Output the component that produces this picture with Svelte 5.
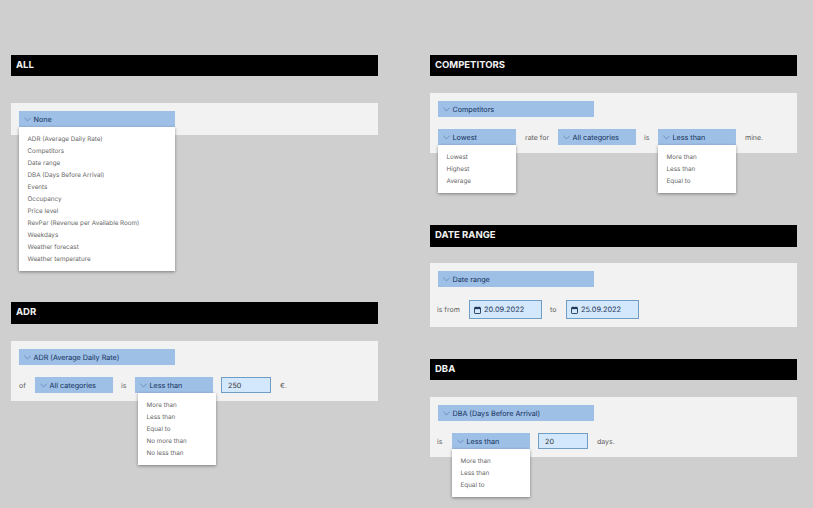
<script>
  const all = ['ADR (Average Daily Rate)','Competitors','Date range','DBA (Days Before Arrival)','Events','Occupancy','Price level','RevPar (Revenue per Available Room)','Weekdays','Weather forecast','Weather temperature'];
  const cmp3 = ['More than','Less than','Equal to'];
  const cmp5 = ['More than','Less than','Equal to','No more than','No less than'];
  const rank = ['Lowest','Highest','Average'];
</script>

{#snippet select(label, wide, items, shift)}
  <div class="select" class:wide>
    <svg class="chev" width="7" height="5" viewBox="0 0 7 5"><path d="M.4.8 3.5 3.9 6.6.8" fill="none" stroke="#4f7db3" stroke-width=".7"/></svg>
    <span>{label}</span>
    {#if items}
      <ul class="menu" class:shift>
        {#each items as item}<li>{item}</li>{/each}
      </ul>
    {/if}
  </div>
{/snippet}

{#snippet date(value)}
  <div class="field date">
    <svg width="7" height="8" viewBox="0 0 7 8"><rect x=".5" y="1.5" width="6" height="6" rx=".6" fill="none" stroke="#1d3557" stroke-width=".9"/><rect x=".5" y="1.5" width="6" height="1.6" fill="#1d3557"/><path d="M2 .4v1.4M5 .4v1.4" stroke="#1d3557" stroke-width=".8"/></svg>
    <span>{value}</span>
  </div>
{/snippet}

<main class="page">
  <div class="column">
    <section class="gap-all">
      <h2 class="title-all">ALL</h2>
      <div class="panel">
        {@render select('None', true, all)}
      </div>
    </section>
    <section>
      <h2 class="tall">ADR</h2>
      <div class="panel">
        {@render select('ADR (Average Daily Rate)', true)}
        <div class="row">
          <span class="w-of">of</span>
          {@render select('All categories')}
          <span class="w-is">is</span>
          {@render select('Less than', false, cmp5, true)}
          <div class="field num">250</div>
          <span class="w-end">€.</span>
        </div>
      </div>
    </section>
  </div>

  <div class="column">
    <section class="gap-comp">
      <h2>COMPETITORS</h2>
      <div class="panel">
        {@render select('Competitors', true)}
        <div class="row">
          {@render select('Lowest', false, rank)}
          <span class="w-rate">rate for</span>
          {@render select('All categories')}
          <span class="w-is2">is</span>
          {@render select('Less than', false, cmp3)}
          <span class="w-end">mine.</span>
        </div>
      </div>
    </section>
    <section class="gap-date">
      <h2 class="tall date-title">DATE RANGE</h2>
      <div class="panel">
        {@render select('Date range', true)}
        <div class="row date-row">
          <span class="w-from">is from</span>
          {@render date('20.09.2022')}
          <span class="w-to">to</span>
          {@render date('25.09.2022')}
        </div>
      </div>
    </section>
    <section>
      <h2>DBA</h2>
      <div class="panel">
        {@render select('DBA (Days Before Arrival)', true)}
        <div class="row">
          <span class="w-of2">is</span>
          {@render select('Less than', false, cmp3)}
          <div class="field num">20</div>
          <span class="w-end">days.</span>
        </div>
      </div>
    </section>
  </div>
</main>

<style>
  :global(body) { margin: 0; background: #cfcfcf; }
  .page {
    display: flex;
    gap: 52px;
    padding: 55px 16px 0 11px;
    height: 453px;
    overflow: hidden;
    opacity: .999;
    text-rendering: geometricPrecision;
    font-family: "Inter", "Liberation Sans", sans-serif;
    font-size: 7px;
    color: #5c5c5c;
  }
  .column { width: 367px; flex: none; }
  section { margin: 0; }
  .gap-all { margin-bottom: 167px; }
  .gap-comp { margin-bottom: 72px; }
  .gap-date { margin-bottom: 32px; }
  h2 {
    margin: 0 0 17px;
    height: 21px;
    line-height: 21px;
    padding-left: 5px;
    background: #000;
    color: #f2f2f2;
    font-size: 9.5px;
    font-weight: 700;
  }
  h2.tall { height: 22px; line-height: 22px; }
  h2.date-title { margin-bottom: 16px; }
  .title-all { margin-bottom: 27px; }
  .panel {
    background: #f2f2f2;
    padding: 8px;
  }
  .row {
    display: flex;
    align-items: center;
    margin-top: 12px;
    height: 16px;
  }
  .date-row { margin-top: 13px; height: 19px; }
  .select {
    position: relative;
    flex: none;
    width: 78px;
    height: 16px;
    display: flex;
    align-items: center;
    background: #9ebfe6;
    color: #12305a;
    font-size: 7.2px;
  }
  .select.wide { width: 156px; }
  .chev { margin: 0 2.5px 0 5px; flex: none; }
  .menu {
    position: absolute;
    left: 0;
    top: 16px;
    z-index: 2;
    width: 78px;
    box-sizing: border-box;
    margin: 0;
    padding: 6px 0 6px 8.5px;
    list-style: none;
    background: #fff;
    box-shadow: 0 1px 3px rgba(0,0,0,.4);
    color: #6a6a6a;
    font-size: 6.3px;
    line-height: 12px;
    white-space: nowrap;
  }
  .wide > .menu { width: 156px; }
  .menu.shift { left: 3px; }
  .field {
    box-sizing: border-box;
    background: #d3e8fc;
    border: 1px solid #6f9dc4;
    color: #333;
    display: flex;
    align-items: center;
  }
  .num { width: 50px; height: 16px; padding-left: 6px; margin-left: 8px; font-size: 7.2px; }
  .date { width: 73px; height: 19px; padding-left: 4px; gap: 3px; color: #1d3557; font-size: 7.4px; }
  .w-of { width: 16px; }
  .w-is { width: 22px; padding-left: 8px; box-sizing: border-box; }
  .w-is2 { width: 22px; padding-left: 8px; box-sizing: border-box; }
  .w-of2 { width: 14px; margin-left: -1px; padding-right: 1px; }
  .w-rate { width: 42px; padding-left: 9px; box-sizing: border-box; }
  .w-end { margin-left: 9px; }
  .w-from { width: 33px; margin-left: -1px; margin-right: -1px; }
  .w-to { width: 24px; padding-left: 8px; box-sizing: border-box; }
</style>
